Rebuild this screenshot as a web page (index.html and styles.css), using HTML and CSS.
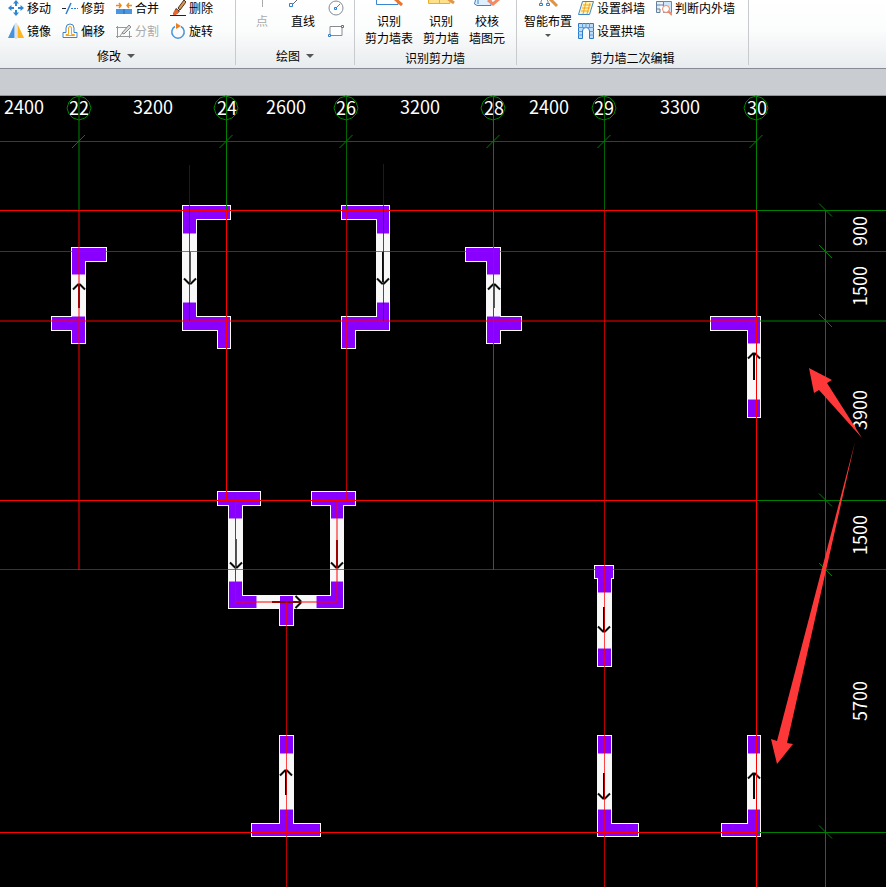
FILE: index.html
```html
<!DOCTYPE html>
<html lang="zh-CN">
<head>
<meta charset="utf-8">
<title>剪力墙</title>
<link rel="stylesheet" href="styles.css">
</head>
<body>
<header class="ribbon">
  <section class="group">
    <div class="group-body tools tools-modify">
      <button class="tool"><svg class="icon" viewBox="0 0 16 16"><path d="M8 0l3 3.500H9V6H7V3.500H5zM8 16l-3-3.500h2V10h2v2.500h2zM0 8l3.500-3v2H6v2H3.500v2zM16 8l-3.500 3V9H10V7h2.500V5z" fill="#2f86d2"/></svg>移动</button>
      <button class="tool"><svg class="icon" viewBox="0 0 16 16"><path d="M0 8.500h4" stroke="#222"/><path d="M4 14l5-11" stroke="#2f7fd0" stroke-width="1.500"/><path d="M9 8.500h7" stroke="#2f7fd0" stroke-dasharray="2 1"/></svg>修剪</button>
      <button class="tool"><svg class="icon" viewBox="0 0 16 16"><path d="M0 9h16v5H0z" fill="#4b96e0"/><path d="M8 9v5" stroke="#2468b5"/><path d="M0 5.500h5M3 3l2 2.500L3 8M16 5.500h-5M13 3l-2 2.500L13 8" stroke="#ee8a1c" stroke-width="1.500" fill="none"/></svg>合并</button>
      <button class="tool"><svg class="icon" viewBox="0 0 16 16"><path d="M8 8L14 0l2 2-6 8z" fill="#d39a58" stroke="#553018"/><path d="M6 8l4 3-3 3H3z" fill="#292929"/><path d="M4 11l3-2 2 3-3 3H3z" fill="#ef642b"/><path d="M0 15.500h16" stroke="#222"/></svg>删除</button>
      <button class="tool"><svg class="icon" viewBox="0 0 16 16"><path d="M6.500 1v14H0z" fill="#4693dd"/><path d="M9.500 1v14H16z" fill="#ffb51b"/><path d="M8 0v16" stroke="#ccc"/></svg>镜像</button>
      <button class="tool"><svg class="icon" viewBox="0 0 16 16"><path d="M1 14.500v-5h3V5a4 4 0 018 0v4.500h3v5z" fill="#fff" stroke="#3984cf"/><path d="M4 12.500v-1h2.500V5a1.500 1.500 0 013 0v6.500h3v1z" fill="none" stroke="#f5a31b"/></svg>偏移</button>
      <button class="tool" disabled><svg class="icon" viewBox="0 0 16 16"><path d="M11 4.500H1.500v9h12V9M0 4.500h3M0 13.500h16M1.500 3v12M13.500 8v7M4 13l3-4" fill="none" stroke="#999"/><path d="M6 10l7-8 2 2-7 7z" fill="#ddd" stroke="#888"/></svg>分割</button>
      <button class="tool"><svg class="icon" viewBox="0 0 16 16"><path d="M5 3.500a6.200 6.200 0 106 0" fill="none" stroke="#4a94db" stroke-width="1.500"/><path d="M6 0l5 3-5 3z" fill="#ee7d20"/></svg>旋转</button>
    </div>
    <button class="group-label">修改<span class="caret"></span></button>
  </section>
  <section class="group group-draw">
    <div class="group-body">
      <button class="big big-point" disabled><svg class="big-icon" viewBox="0 0 32 9"><path d="M16.500 0v7" stroke="#aaa"/></svg>点</button>
      <button class="big big-line"><svg class="big-icon" viewBox="0 0 32 9"><path d="M6 4l6-6" stroke="#666"/><path d="M2.500 3.500h3v3h-3z" fill="#fff" stroke="#2f7fd0"/></svg>直线</button>
      <div class="tools tools-shape">
        <button class="tool" aria-label="圆"><svg class="icon" viewBox="0 0 16 16"><circle cx="8" cy="8" r="7" fill="#fff" stroke="#858c94"/><path d="M8 8l4-4" stroke="#777"/><path d="M6.500 7.500h2v2h-2z" fill="#fff" stroke="#2f7fd0"/></svg></button>
        <button class="tool" aria-label="矩形"><svg class="icon" viewBox="0 0 16 16"><path d="M2 3.500h12v9H2z" fill="#fff" stroke="#858c94"/><path d="M.5 11.500h2v2h-2zM13.500 2.500h2v2h-2z" fill="#fff" stroke="#2f7fd0"/></svg></button>
      </div>
    </div>
    <button class="group-label">绘图<span class="caret"></span></button>
  </section>
  <section class="group group-detect">
    <div class="group-body">
      <button class="big"><svg class="big-icon" viewBox="0 0 32 9"><path d="M3.500-2v6.500H25V-2" fill="#fff" stroke="#3b86d0"/><path d="M21-2l8 7" stroke="#ee7527" stroke-width="3"/></svg>识别<br>剪力墙表</button>
      <button class="big"><svg class="big-icon" viewBox="0 0 32 9"><path d="M3.500-2v5.500H25V-2M14.500-2v5" fill="#ffe08a" stroke="#f2ad28"/><path d="M22-2l7 5" stroke="#e29548" stroke-width="3"/></svg>识别<br>剪力墙</button>
      <button class="big"><svg class="big-icon" viewBox="0 0 32 9"><path d="M5-2L3.500 4 6 5.500h14V-2M7-2v6" fill="#deefff" stroke="#3b86d0"/><path d="M17 0l5 4 7-6" fill="none" stroke="#f48a63" stroke-width="3"/></svg>校核<br>墙图元</button>
    </div>
    <div class="group-label group-label-low">识别剪力墙</div>
  </section>
  <section class="group group-edit">
    <div class="group-body">
      <button class="big"><svg class="big-icon" viewBox="0 0 32 9"><path d="M9 4V1l3-3M16 4V1l-3-3" fill="none" stroke="#888"/><path d="M7.500 3.500h3v2h-3zM14.500 3.500h3v2h-3z" fill="#fff" stroke="#2f7fd0"/><path d="M17-2l8 8" stroke="#df9145" stroke-width="3"/></svg>智能布置<span class="caret caret-small"></span></button>
      <div class="tools tools-edit">
        <button class="tool"><svg class="icon" viewBox="0 0 16 16"><path d="M4.500 1.500h11l-4 13H.5z" fill="#fff4bd" stroke="#3b86d0"/><path d="M5 5h8M4 8h8M3 11h8M8 2L5 14M12 3L9 14" stroke="#f3a617"/></svg>设置斜墙</button>
        <button class="tool"><svg class="icon" viewBox="0 0 16 16"><path d="M5 1.500H.5v11H4V9M5 1.500h3v11M.5 5H8M.5 9H4" fill="#e4edf6" stroke="#657f9e"/><path d="M7.500 1.500h8v11h-8z" fill="#cce5fc" stroke="#4b91d5"/><circle cx="10" cy="9" r="3.500" fill="#fff" stroke="#f28962"/><path d="M12 11l4 4" stroke="#f28962" stroke-width="2"/></svg>判断内外墙</button>
        <button class="tool"><svg class="icon" viewBox="0 0 16 16"><path d="M.5.5h15v15h-4V8a3.500 3.500 0 00-7 0v7.500h-4z" fill="#bcdcf8" stroke="#2b7bcb"/><path d="M0 4.500h16M4.500 0v5M8 0v4M11.500 0v5M0 8.500h4M0 12h4M12 8.500h4M12 12h4" stroke="#5a9cdb"/></svg>设置拱墙</button>
      </div>
    </div>
    <div class="group-label group-label-low">剪力墙二次编辑</div>
  </section>
</header>
<div class="strip"></div>
<main class="canvas">
<svg class="plan" viewBox="0 96 886 791" preserveAspectRatio="xMinYMin meet">
  <defs>
    <path id="head" d="M-6 5.500L-1 .5H1L6 5.500"/>
    <polygon id="bubble" points="12,0 10,6 6,10 0,12 -6,10 -10,6 -12,0 -10,-6 -6,-10 0,-12 6,-10 10,-6"/>
    <path id="tick" d="M-6.500 6.500L6.500-6.500"/>
    <path id="tick-side" d="M-6.500-6.500L6.500 6.500"/>
  </defs>
  <g class="dim">
    <text x="24" y="114">2400</text><text x="153" y="114">3200</text><text x="286" y="114">2600</text><text x="420" y="114">3200</text><text x="549" y="114">2400</text><text x="680" y="114">3300</text>
    <text x="79" y="115">22</text><text x="227" y="115">24</text><text x="346" y="115">26</text><text x="494" y="115">28</text><text x="604" y="115">29</text><text x="757" y="115">30</text>
    <text transform="translate(867 231) rotate(-90)">900</text><text transform="translate(867 286) rotate(-90)">1500</text><text transform="translate(867 410) rotate(-90)">3900</text><text transform="translate(867 535) rotate(-90)">1500</text><text transform="translate(867 701) rotate(-90)">5700</text>
  </g>
  <g class="walls">
    <path d="M71 274h15v43H71zM182 233h15v70h-15zM376 233h14v70h-14zM486 274h15v43h-15zM747 343h14v57h-14zM228 518h15v64h-15zM330 518h14v64h-14zM256 595h61v14h-61zM597 592h15v57h-15zM597 753h15v57h-15zM747 753h14v57h-14zM279 753h15v57h-15z"/>
  </g>
  <g class="columns">
    <path d="M71.500 247.500h35v14h-21v13h-14zM51.500 316.500h34v27h-14v-13h-20z"/>
    <path d="M182.500 205.500h48v14h-34v14h-14zM182.500 302.500h14v14h34v32h-13v-18h-35z"/>
    <path d="M341.500 205.500h48v28h-13v-14h-35zM376.500 302.500h13v28h-34v18h-14v-32h35z"/>
    <path d="M465.500 247.500h35v27h-14v-13h-21zM486.500 316.500h35v14h-21v13h-14z"/>
    <path d="M710.500 316.500h50v27h-13v-13h-37zM747.500 399.500h13v18h-13z"/>
    <path d="M217.500 491.500h43v14h-18v13h-14v-13h-11zM311.500 491.500h44v14h-12v13h-13v-13h-19z"/>
    <path d="M228.500 581.500h14v14h14v13h-28zM330.500 581.500h13v27h-27v-13h14zM279.500 595.500h14v30h-14z"/>
    <path d="M594.500 565.500h19v13h-2v14h-14v-14h-3zM597.500 648.500h14v18h-14z"/>
    <path d="M597.500 735.500h14v18h-14zM597.500 809.500h14v14h27v13h-41z"/>
    <path d="M747.500 735.500h13v18h-13zM747.500 809.500h13v27h-39v-13h26z"/>
    <path d="M279.500 735.500h14v18h-14zM279.500 809.500h14v14h27v13h-69v-13h28z"/>
  </g>
  <g class="joints">
    <path d="M72 274.500h13M72 316.500h13M183 233.500h13M183 302.500h13M377 233.500h12M377 302.500h12M487 274.500h13M487 316.500h13M748 343.500h12M748 399.500h12M229 518.500h13M229 581.500h13M331 518.500h12M331 581.500h12M256.500 596v12M316.500 596v12M598 592.500h13M598 648.500h13M598 753.500h13M598 809.500h13M748 753.500h12M748 809.500h12M280 753.500h13M280 809.500h13"/>
  </g>
  <g class="arrows">
    <path class="maroon" d="M79 285v23M337 540v27M272 602h25"/>
    <path d="M383 252v30M754 354v26M604 607v24M604 773v26M754 773v26M286 771v24M280 602h20"/>
    <path class="thin" d="M190.500 252v30M494.500 285v23M236.500 539v28"/>
    <use href="#head" x="79" y="284"/><use href="#head" x="494" y="284"/><use href="#head" x="754" y="353"/><use href="#head" x="286" y="770"/><use href="#head" x="754" y="773"/>
    <use href="#head" transform="translate(190 284) rotate(180)"/><use href="#head" transform="translate(383 284) rotate(180)"/><use href="#head" transform="translate(236 568) rotate(180)"/><use href="#head" transform="translate(337 568) rotate(180)"/><use href="#head" transform="translate(604 632) rotate(180)"/><use href="#head" transform="translate(604 799) rotate(180)"/><use href="#head" transform="translate(301 602) rotate(90)"/>
  </g>
  <g class="grid green">
    <path d="M226.500 96v114M493.500 96v114M756.500 96v114M756 210.500h130M756 500.500h130M756 832.500h130M825.500 210v677"/>
    <path class="mid" d="M0 141.500h756M346.500 96v114M604.500 96v114M756 251.500h130M756 569.500h130"/>
    <path class="wide" d="M79 96v114M756 321h130"/>
  </g>
  <g class="grid red">
    <path d="M0 210.500h756M0 500.500h756M0 832.500h756M226.500 210v290M493.500 210v360M756.500 210v677M235.500 500v102"/>
    <path class="mid" d="M0 251.500h756M0 569.500h756M346.500 210v290M604.500 210v677M286.500 602v285"/>
    <path class="wide" d="M79 210v360M0 321h756M337 500v102M235 602h102"/>
    <path class="faint" d="M189.500 165v156M383.500 164v157"/>
  </g>
  <g class="marks">
    <use href="#bubble" x="79" y="108"/><use href="#bubble" x="226" y="108"/><use href="#bubble" x="346" y="108"/><use href="#bubble" x="493" y="108"/><use href="#bubble" x="604" y="108"/><use href="#bubble" x="756" y="108"/>
    <use href="#tick" x="78.500" y="141.500"/><use href="#tick" x="226" y="141.500"/><use href="#tick" x="346" y="141.500"/><use href="#tick" x="493" y="141.500"/><use href="#tick" x="604" y="141.500"/><use href="#tick" x="756" y="141.500"/>
    <use href="#tick-side" x="825.500" y="210"/><use href="#tick-side" x="825.500" y="251.500"/><use href="#tick-side" x="825.500" y="320.500"/><use href="#tick-side" x="825.500" y="500"/><use href="#tick-side" x="825.500" y="569.500"/><use href="#tick-side" x="825.500" y="832"/>
  </g>
  <g class="callouts">
    <polygon points="809,368 832,380 827,383 862,438 819,390 814,393"/>
    <polygon points="777,764 793,744 787,743 855,442 777,741 771,739"/>
  </g>
</svg>
</main>
</body>
</html>
```
FILE: styles.css
```css
* { box-sizing: border-box; }

body {
  margin: 0;
  min-height: 100vh;
  display: flex;
  flex-direction: column;
  background: #000;
  color: #000;
  font: 12px/17px "Noto Sans CJK SC", sans-serif;
}

button {
  margin: 0;
  padding: 0;
  border: 0;
  background: none;
  color: inherit;
  font: inherit;
  white-space: nowrap;
}

button:disabled { color: #aaa; }

.ribbon {
  display: flex;
  height: 69px;
  padding-bottom: 3px;
  overflow: hidden;
  background: linear-gradient(#fff 0%, #fbfcfc 45%, #e8ecee 100%);
  border-bottom: 1px solid #868b95;
}

.group {
  display: flex;
  flex-direction: column;
  padding: 0 11px 0 8px;
  border-right: 1px solid #c8cbce;
}

.group-body {
  display: flex;
  flex: none;
  height: 46px;
}

.tools {
  display: grid;
  grid-auto-rows: 23px;
  margin-top: -4px;
}

.tools-modify { grid-template-columns: repeat(4, 54px); }

.group-body.tools {
  height: 50px;
}

.tool {
  display: flex;
  align-items: center;
  gap: 3px;
}

.icon {
  width: 16px;
  height: 16px;
  flex: none;
}

.big {
  display: flex;
  flex-direction: column;
  align-items: center;
  text-align: center;
}

.big-icon {
  flex: none;
  width: 32px;
  height: 9px;
  margin-bottom: 3px;
}

.group-label {
  display: flex;
  flex: none;
  align-items: center;
  justify-content: center;
  gap: 6px;
  height: 19px;
}

.group-label-low {
  height: 23px;
}

.caret {
  border: 4px solid transparent;
  border-top-color: #555;
  border-bottom: 0;
}

.caret-small {
  margin-top: 5px;
  border-width: 3px 3px 0;
}

.group-draw { padding: 0 10px; }
.big-point { width: 32px; }
.big-line { width: 52px; }
.tools-shape { margin-left: auto; }
.group-draw .group-body { width: 98px; }

.group-detect { padding: 0 11px 0 10px; }
.group-detect .group-body { gap: 10px; }

.group-edit { padding: 0; }
.group-edit .group-body {
  gap: 6px;
  margin: 0 13px 0 7px;
}

.tools-edit {
  grid-template-columns: repeat(2, auto);
  column-gap: 11px;
}

.strip {
  height: 27px;
  background: #c9ccd1;
  border-bottom: 1px solid #8f9498;
}

.canvas {
  flex: 1;
  background: #000;
}

.plan {
  display: block;
  width: 100%;
  overflow: visible;
}

.dim {
  fill: #fff;
  font: 18px "Noto Sans CJK SC", sans-serif;
  text-anchor: middle;
}

.walls { fill: #f8f8f8; }
.columns { fill: #8a00ff; stroke: #fff; shape-rendering: crispEdges; }
.joints { stroke: #c080ff; shape-rendering: crispEdges; }

.arrows { fill: none; stroke: #0a0a0a; stroke-width: 2; }
.arrows .maroon { stroke: #400000; }
.arrows .thin { stroke: #555; stroke-width: 1; }

.grid { fill: none; shape-rendering: crispEdges; }
.green { stroke: #008000; }
.green .mid { stroke: #006400; }
.green .wide { stroke: #008000; stroke-opacity: .5; stroke-width: 2; }
.red { stroke: #f00; }
.red .mid { stroke: #f00; stroke-opacity: .72; }
.red .wide { stroke: #f00; stroke-opacity: .5; stroke-width: 2; }
.red .faint { stroke: #700000; stroke-opacity: .8; }

.marks { fill: none; stroke: #008000; }

.callouts { fill: #fe3838; }
```
